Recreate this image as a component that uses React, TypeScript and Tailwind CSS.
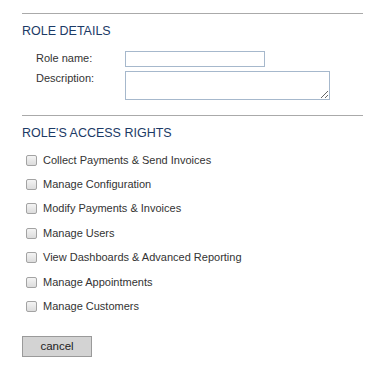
const rights = [
  'Collect Payments & Send Invoices',
  'Manage Configuration',
  'Modify Payments & Invoices',
  'Manage Users',
  'View Dashboards & Advanced Reporting',
  'Manage Appointments',
  'Manage Customers',
]

export default function App() {
  return (
    <div className="w-[371px] h-[377px] bg-white pl-[22px] pr-[8px] pt-[13px] font-['Liberation_Sans',Arial,sans-serif] text-[#333]">
      <div className="h-px bg-[#aaaaaa]" />
      <h2 className="mt-[10px] text-[12.5px] leading-[15px] text-[#1b3a66]">ROLE DETAILS</h2>

      {/* Role details form */}
      <div className="mt-[12px] pl-[14px] flex flex-col gap-[4px]">
        <div className="flex">
          <label className="w-[89px] text-[11px] leading-[13px] pt-px">Role name:</label>
          <input type="text" className="w-[140px] h-[16px] border border-[#a6b8cc] bg-white outline-none" />
        </div>
        <div className="flex">
          <label className="w-[89px] text-[11px] leading-[13px] pt-px">Description:</label>
          <textarea className="w-[205px] h-[29px] border border-[#a6b8cc] bg-white outline-none block" />
        </div>
      </div>

      <div className="mt-[15px] h-px bg-[#aaaaaa]" />
      <h2 className="mt-[10px] text-[12.5px] leading-[15px] text-[#1b3a66]">ROLE'S ACCESS RIGHTS</h2>

      {/* Access rights */}
      <div className="mt-[7px] flex flex-col">
        {rights.map(r => (
          <div key={r} className="h-[24.4px] flex items-center pl-[4px] gap-[6px]">
            <span className="w-[11px] h-[11px] rounded-[2px] border border-[#a3a3a3] bg-gradient-to-b from-[#f4f4f4] to-[#dcdcdc] shrink-0" />
            <span className="text-[11px] leading-[13px] text-[#333]">{r}</span>
          </div>
        ))}
      </div>

      <button
        type="button"
        className="mt-[17px] w-[70px] h-[21px] bg-[#d3d3d3] border border-[#9a9a9a] text-[11.5px] leading-[19px] text-[#222] text-center"
      >
        cancel
      </button>
    </div>
  )
}
